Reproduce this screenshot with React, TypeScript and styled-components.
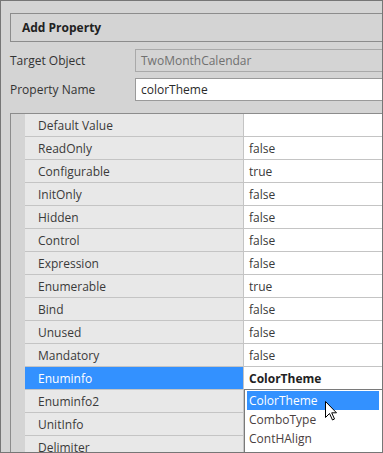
import { createGlobalStyle, styled } from 'styled-components';

const GlobalStyle = createGlobalStyle`
  html, body {
    margin: 0;
    padding: 0;
    background: #ffffff;
  }
  body {
    font-family: 'Open Sans', 'Noto Sans', 'Liberation Sans', sans-serif;
    font-size: 12px;
    color: #3a3a3a;
  }
`;

const Frame = styled.div`
  position: relative;
  box-sizing: border-box;
  width: 383px;
  height: 453px;
  border: 1px solid #767676;
  background: #d4d4d4;
  overflow: hidden;
`;

const Content = styled.div`
  width: 440px;
  padding: 12px 0 0 9px;
  display: flex;
  flex-direction: column;
`;

const Header = styled.div`
  box-sizing: border-box;
  height: 29px;
  display: flex;
  align-items: center;
  padding-left: 11px;
  border: 1px solid #8c8c8c;
  font-weight: 700;
  color: #222;
`;

const Form = styled.div`
  display: flex;
  flex-direction: column;
  gap: 6px;
  margin-top: 7px;
`;

const FieldRow = styled.div`
  display: flex;
  align-items: center;
`;

const FieldLabel = styled.span`
  width: 125px;
  flex: none;
  color: #333;
`;

const Input = styled.div<{ $disabled?: boolean }>`
  box-sizing: border-box;
  flex: 1;
  height: 23px;
  display: flex;
  align-items: center;
  padding-left: 5px;
  border: 1px solid ${(p) => (p.$disabled ? '#a9a9a9' : '#9a9a9a')};
  background: ${(p) => (p.$disabled ? '#d4d4d4' : '#ffffff')};
  color: ${(p) => (p.$disabled ? '#707070' : '#2a2a2a')};
`;

const Grid = styled.div`
  position: relative;
  margin-top: 12px;
  display: flex;
  border-left: 1px solid #8c8c8c;
  border-top: 1px solid #8c8c8c;
`;

const Gutter = styled.div`
  width: 14px;
  flex: none;
  background: #d4d4d4;
`;

const Rows = styled.div`
  flex: 1;
  display: flex;
  flex-direction: column;
`;

const Row = styled.div`
  display: flex;
  height: 23px;
  box-sizing: border-box;
  border-bottom: 1px solid #c4c4c4;
`;

const NameCell = styled.div<{ $selected?: boolean }>`
  width: 219px;
  flex: none;
  box-sizing: border-box;
  display: flex;
  align-items: center;
  padding-left: 13px;
  border-right: 1px solid #c4c4c4;
  background: ${(p) => (p.$selected ? '#3391ff' : '#e8e8e8')};
  color: ${(p) => (p.$selected ? '#ffffff' : '#3a3a3a')};
`;

const ValueCell = styled.div<{ $bold?: boolean }>`
  flex: 1;
  display: flex;
  align-items: center;
  padding-left: 5px;
  background: #ffffff;
  font-weight: ${(p) => (p.$bold ? 700 : 400)};
  color: ${(p) => (p.$bold ? '#222' : '#3a3a3a')};
`;

const Dropdown = styled.div`
  position: absolute;
  left: 233px;
  top: 275px;
  width: 139px;
  height: 80px;
  box-sizing: border-box;
  border: 1px solid #7a7a7a;
  background: #ffffff;
  padding: 1px 3px 0 2px;
  display: flex;
  flex-direction: column;
`;

const Option = styled.div<{ $active?: boolean }>`
  height: 19px;
  flex: none;
  display: flex;
  align-items: center;
  padding-left: 2px;
  background: ${(p) => (p.$active ? '#3391ff' : 'transparent')};
  color: ${(p) => (p.$active ? '#ffffff' : '#4a4040')};
`;

const Pointer = styled.svg`
  position: absolute;
  left: 80px;
  top: 11px;
`;

const rows: [string, string][] = [
  ['Default Value', ''],
  ['ReadOnly', 'false'],
  ['Configurable', 'true'],
  ['InitOnly', 'false'],
  ['Hidden', 'false'],
  ['Control', 'false'],
  ['Expression', 'false'],
  ['Enumerable', 'true'],
  ['Bind', 'false'],
  ['Unused', 'false'],
  ['Mandatory', 'false'],
  ['Enuminfo', 'ColorTheme'],
  ['Enuminfo2', ''],
  ['UnitInfo', ''],
  ['Delimiter', ''],
];

const options = ['ColorTheme', 'ComboType', 'ContHAlign'];

const App = () => {
  return (
    <Frame>
      <GlobalStyle />
      <Content>
        <Header>Add Property</Header>
        <Form>
          <FieldRow>
            <FieldLabel>Target Object</FieldLabel>
            <Input $disabled>TwoMonthCalendar</Input>
          </FieldRow>
          <FieldRow>
            <FieldLabel>Property Name</FieldLabel>
            <Input>colorTheme</Input>
          </FieldRow>
        </Form>
        <Grid>
          <Gutter />
          <Rows>
            {rows.map(([name, value]) => {
              const selected = name === 'Enuminfo';
              return (
                <Row key={name}>
                  <NameCell $selected={selected}>{name}</NameCell>
                  <ValueCell $bold={selected}>{value}</ValueCell>
                </Row>
              );
            })}
          </Rows>
          <Dropdown>
            {options.map((opt, i) => (
              <Option key={opt} $active={i === 0}>
                {opt}
              </Option>
            ))}
            <Pointer width="13" height="20" viewBox="0 0 13 20">
              <path
                d="M0.5 0.5 L0.5 16.5 L4.5 12.5 L7.5 19 L9.5 18 L6.7 11.8 L11.5 11.8 Z"
                fill="#ffffff"
                stroke="#000000"
                strokeWidth="1"
                strokeLinejoin="miter"
              />
            </Pointer>
          </Dropdown>
        </Grid>
      </Content>
    </Frame>
  );
};

export default App;
